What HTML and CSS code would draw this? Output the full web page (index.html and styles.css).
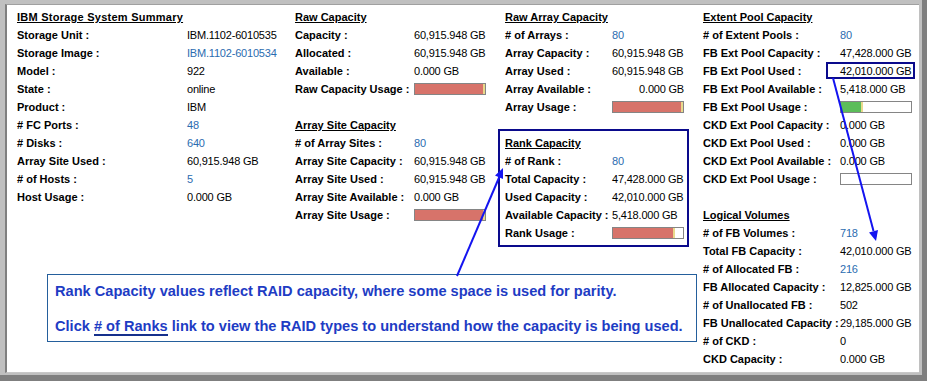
FILE: index.html
```html
<!DOCTYPE html>
<html>
<head>
<meta charset="utf-8">
<title>IBM Storage System Summary</title>
<link rel="stylesheet" href="styles.css">
</head>
<body>
<div class="frame">
  <div class="panel">
    <div class="main">
      <div class="left">
        <div class="cols3">
          <section class="col c1">
            <h3 class="hd">IBM Storage System Summary</h3>
            <div class="row"><span class="k">Storage Unit :</span><span class="v">IBM.1102-6010535</span></div>
            <div class="row"><span class="k">Storage Image :</span><span class="v link">IBM.1102-6010534</span></div>
            <div class="row"><span class="k">Model :</span><span class="v">922</span></div>
            <div class="row"><span class="k">State :</span><span class="v">online</span></div>
            <div class="row"><span class="k">Product :</span><span class="v">IBM</span></div>
            <div class="row"><span class="k"># FC Ports :</span><span class="v link">48</span></div>
            <div class="row"><span class="k"># Disks :</span><span class="v link">640</span></div>
            <div class="row"><span class="k">Array Site Used :</span><span class="v">60,915.948 GB</span></div>
            <div class="row"><span class="k"># of Hosts :</span><span class="v link">5</span></div>
            <div class="row"><span class="k">Host Usage :</span><span class="v">0.000 GB</span></div>
          </section>
          <section class="col c2">
            <h3 class="hd">Raw Capacity</h3>
            <div class="row"><span class="k">Capacity :</span><span class="v">60,915.948 GB</span></div>
            <div class="row"><span class="k">Allocated :</span><span class="v">60,915.948 GB</span></div>
            <div class="row"><span class="k">Available :</span><span class="v">0.000 GB</span></div>
            <div class="row"><span class="k">Raw Capacity Usage :</span><span class="bar"><span class="fill red" style="width:100%"></span></span></div>
            <h3 class="hd gap">Array Site Capacity</h3>
            <div class="row"><span class="k"># of Array Sites :</span><span class="v link">80</span></div>
            <div class="row"><span class="k">Array Site Capacity :</span><span class="v">60,915.948 GB</span></div>
            <div class="row"><span class="k">Array Site Used :</span><span class="v">60,915.948 GB</span></div>
            <div class="row"><span class="k">Array Site Available :</span><span class="v">0.000 GB</span></div>
            <div class="row"><span class="k">Array Site Usage :</span><span class="bar"><span class="fill red" style="width:100%"></span></span></div>
          </section>
          <section class="col c3">
            <h3 class="hd">Raw Array Capacity</h3>
            <div class="row"><span class="k"># of Arrays :</span><span class="v link">80</span></div>
            <div class="row"><span class="k">Array Capacity :</span><span class="v">60,915.948 GB</span></div>
            <div class="row"><span class="k">Array Used :</span><span class="v">60,915.948 GB</span></div>
            <div class="row"><span class="k">Array Available :</span><span class="v right">0.000 GB</span></div>
            <div class="row"><span class="k">Array Usage :</span><span class="bar"><span class="fill red" style="width:100%"></span></span></div>
            <div class="rankbox">
              <h3 class="hd">Rank Capacity</h3>
              <div class="row"><span class="k"># of Rank :</span><span class="v link">80</span></div>
              <div class="row"><span class="k">Total Capacity :</span><span class="v">47,428.000 GB</span></div>
              <div class="row"><span class="k">Used Capacity :</span><span class="v">42,010.000 GB</span></div>
              <div class="row"><span class="k">Available Capacity :</span><span class="v">5,418.000 GB</span></div>
              <div class="row"><span class="k">Rank Usage :</span><span class="bar"><span class="fill red" style="width:88.6%"></span></span></div>
            </div>
          </section>
        </div>
        <div class="note">
          <p>Rank Capacity values reflect RAID capacity, where some space is used for parity.</p>
          <p class="gapline">Click <u class="ranks"># of Ranks</u> link to view the RAID types to understand how the capacity is being used.</p>
        </div>
      </div>
      <section class="col c4">
        <h3 class="hd">Extent Pool Capacity</h3>
        <div class="row"><span class="k"># of Extent Pools :</span><span class="v link">80</span></div>
        <div class="row"><span class="k">FB Ext Pool Capacity :</span><span class="v">47,428.000 GB</span></div>
        <div class="row"><span class="k">FB Ext Pool Used :</span><span class="v">42,010.000 GB</span></div>
        <div class="row"><span class="k">FB Ext Pool Available :</span><span class="v">5,418.000 GB</span></div>
        <div class="row"><span class="k">FB Ext Pool Usage :</span><span class="bar"><span class="fill green" style="width:31%"></span></span></div>
        <div class="row"><span class="k">CKD Ext Pool Capacity :</span><span class="v">0.000 GB</span></div>
        <div class="row"><span class="k">CKD Ext Pool Used :</span><span class="v">0.000 GB</span></div>
        <div class="row"><span class="k">CKD Ext Pool Available :</span><span class="v">0.000 GB</span></div>
        <div class="row"><span class="k">CKD Ext Pool Usage :</span><span class="bar"></span></div>
        <h3 class="hd gap">Logical Volumes</h3>
        <div class="row"><span class="k"># of FB Volumes :</span><span class="v link">718</span></div>
        <div class="row"><span class="k">Total FB Capacity :</span><span class="v">42,010.000 GB</span></div>
        <div class="row"><span class="k"># of Allocated FB :</span><span class="v link">216</span></div>
        <div class="row"><span class="k">FB Allocated Capacity :</span><span class="v">12,825.000 GB</span></div>
        <div class="row"><span class="k"># of Unallocated FB :</span><span class="v">502</span></div>
        <div class="row"><span class="k">FB Unallocated Capacity :</span><span class="v">29,185.000 GB</span></div>
        <div class="row"><span class="k"># of CKD :</span><span class="v">0</span></div>
        <div class="row"><span class="k">CKD Capacity :</span><span class="v">0.000 GB</span></div>
      </section>
    </div>
  </div>
  <svg class="overlay" width="927" height="381" viewBox="0 0 927 381" aria-hidden="true">
    <rect x="827" y="63" width="87" height="15" fill="none" stroke="#0a0a8c" stroke-width="2"/>
    <line x1="457" y1="276" x2="499.5" y2="176.5" stroke="#1414f0" stroke-width="2"/>
    <polygon points="503,168 503,179 495,175.5" fill="#1414f0"/>
    <line x1="833" y1="78" x2="873.5" y2="231" stroke="#1414f0" stroke-width="2"/>
    <polygon points="876,241 878,230 869,232.5" fill="#1414f0"/>
  </svg>
</div>
</body>
</html>
```

FILE: styles.css
```css
body {
  margin: 0;
  font-family: "Liberation Sans", Arial, sans-serif;
  color: #000;
  background: #fff;
}

.frame {
  position: relative;
  width: 927px;
  height: 381px;
  box-sizing: border-box;
  background: #c0c0c0;
  padding: 4px 3px 2px 5px;
  border-right: 5px solid #7f7f7f;
  border-bottom: 6px solid #7f7f7f;
}

.panel {
  height: 100%;
  box-sizing: border-box;
  background: #fff;
  border-left: 2px solid #808080;
  border-top: 1px solid #a0a0a0;
  border-bottom: 1px solid #c8c8c8;
  padding: 3px 0 0 10px;
}

.main {
  display: flex;
  align-items: flex-start;
}

.left {
  width: 686px;
}

.cols3 {
  display: flex;
  align-items: flex-start;
}

.c1 { width: 278px; }
.c2 { width: 210px; }
.c3 { width: 198px; }
.c4 { flex: 1; }

.hd {
  margin: 0;
  font-size: 11px;
  font-weight: bold;
  line-height: 18px;
  height: 18px;
  text-decoration: underline;
}

.c1 .hd:first-child {
  letter-spacing: 0.25px;
}

.hd.gap {
  margin-top: 18px;
}

.row {
  display: grid;
  align-items: center;
  height: 18px;
  line-height: 18px;
  font-size: 11px;
  white-space: nowrap;
}

.c1 .row { grid-template-columns: 170px 1fr; }
.c2 .row { grid-template-columns: 119px 1fr; }
.c3 .row { grid-template-columns: 107px 72px; }
.c4 .row { grid-template-columns: 137px 1fr; }

.k {
  font-weight: bold;
}

.v {
  letter-spacing: -0.2px;
}

.v.right {
  text-align: right;
}

.link {
  color: #2b6cb0;
}

.bar {
  display: flex;
  width: 72px;
  height: 12px;
  box-sizing: border-box;
  border: 1px solid #858585;
  background: #fff;
}

.fill {
  height: 100%;
  box-sizing: border-box;
  border-right: 2px solid #e9d98c;
}

.fill.red { background: #d7736a; }
.fill.green { background: #5cbd5a; }

.rankbox {
  margin-top: 13px;
  margin-left: -7px;
  width: 191px;
  box-sizing: border-box;
  border: 2px solid #0a0a8c;
  padding: 3px 3px 3px 5px;
}

.note {
  margin: 27px 0 0 30px;
  width: 650px;
  height: 68px;
  box-sizing: border-box;
  border: 1px solid #245f9c;
  padding: 8px 0 0 7px;
  color: #1e3cc4;
  font-size: 14.6px;
  font-weight: bold;
  line-height: 17.5px;
  white-space: nowrap;
}

.note p {
  margin: 0;
}

.note .gapline {
  margin-top: 17.5px;
}

.ranks {
  text-decoration: none;
  border-bottom: 2px solid #16308c;
}

.overlay {
  position: absolute;
  left: 0;
  top: 0;
  pointer-events: none;
}
```
